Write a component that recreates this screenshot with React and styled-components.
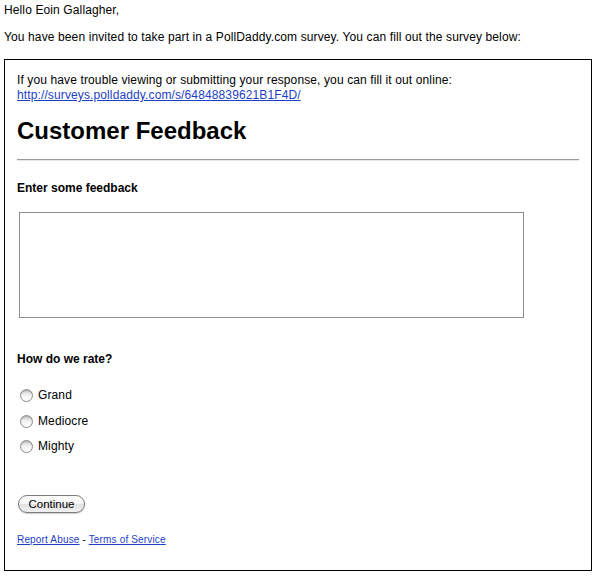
import React from "react";
import styled, { createGlobalStyle } from "styled-components";

const Global = createGlobalStyle`
  html, body { margin: 0; padding: 0; background: #fff; }
  body { font-family: "Liberation Sans", Arial, Helvetica, sans-serif; font-size: 12px; color: #000; }
`;

const Page = styled.div`
  padding: 3px 4px 6px 4px;
`;

const Para = styled.p`
  margin: ${(p) => p.$top || 0}px 0 0 0;
  line-height: 15px;
  letter-spacing: 0.12px;
`;

const SurveyBox = styled.div`
  margin-top: 14px;
  border: 1px solid #000;
  padding: 13px 12px 24px 12px;
`;

const Notice = styled.div`
  line-height: 15px;
  letter-spacing: 0.12px;
`;

const Link = styled.a`
  color: #1d3fc6;
  text-decoration: underline;
`;

const Title = styled.h1`
  margin: 14px 0 0 0;
  font-size: 24px;
  line-height: 28px;
  font-weight: bold;
`;

const Rule = styled.hr`
  margin: 14px 0 0 0;
  height: 0;
  border: 0;
  border-top: 1px solid #9a9a9a;
  border-bottom: 1px solid #e8e8e8;
`;

const Question = styled.div`
  margin-top: ${(p) => p.$top}px;
  font-weight: bold;
  line-height: 15px;
`;

const FeedbackArea = styled.textarea`
  display: block;
  box-sizing: border-box;
  margin: 16px 0 0 2px;
  width: 505px;
  height: 106px;
  border: 1px solid #8e8e8e;
  padding: 2px;
  resize: none;
  font-family: inherit;
  font-size: 12px;
  outline: none;
`;

const Options = styled.div`
  margin-top: 21px;
  display: flex;
  flex-direction: column;
  gap: 10.5px;
`;

const Option = styled.label`
  display: flex;
  align-items: center;
  line-height: 15px;
  height: 15px;
  gap: 5px;
  padding-left: 3px;
  letter-spacing: 0.12px;
`;

const Radio = styled.input`
  appearance: none;
  -webkit-appearance: none;
  margin: 0;
  width: 13px;
  height: 13px;
  border-radius: 50%;
  border: 1px solid #8a8a8a;
  box-sizing: border-box;
  background: linear-gradient(#c9c9c9 0%, #f2f2f2 45%, #ffffff 100%);
  box-shadow: inset 0 1px 1px rgba(0, 0, 0, 0.15);
`;

const ContinueButton = styled.button`
  margin: 41px 0 0 1px;
  display: block;
  height: 18px;
  width: 67px;
  padding: 0;
  border-radius: 9px;
  border: 1px solid #7c7c7c;
  background: linear-gradient(#ffffff 0%, #f4f4f4 50%, #e2e2e2 51%, #f0f0f0 100%);
  box-shadow: 0 1px 1px rgba(0, 0, 0, 0.2);
  font-family: "Liberation Sans", Arial, sans-serif;
  font-size: 11.5px;
  color: #000;
  line-height: 16px;
`;

const Footer = styled.div`
  margin-top: 20.5px;
  font-size: 10px;
  line-height: 12px;
  letter-spacing: 0.16px;
`;

export default function App() {
  const options = ["Grand", "Mediocre", "Mighty"];
  return (
    <>
      <Global />
      <Page>
        <Para>Hello Eoin Gallagher,</Para>
        <Para $top={12}>
          You have been invited to take part in a PollDaddy.com survey. You can fill out the survey below:
        </Para>
        <SurveyBox>
          <Notice>
            If you have trouble viewing or submitting your response, you can fill it out online:
            <br />
            <Link href="#">http://surveys.polldaddy.com/s/64848839621B1F4D/</Link>
          </Notice>
          <Title>Customer Feedback</Title>
          <Rule />
          <Question $top={20}>Enter some feedback</Question>
          <FeedbackArea />
          <Question $top={34}>How do we rate?</Question>
          <Options>
            {options.map((o) => (
              <Option key={o}>
                <Radio type="radio" name="rate" />
                {o}
              </Option>
            ))}
          </Options>
          <ContinueButton>Continue</ContinueButton>
          <Footer>
            <Link href="#">Report Abuse</Link> - <Link href="#">Terms of Service</Link>
          </Footer>
        </SurveyBox>
      </Page>
    </>
  );
}
